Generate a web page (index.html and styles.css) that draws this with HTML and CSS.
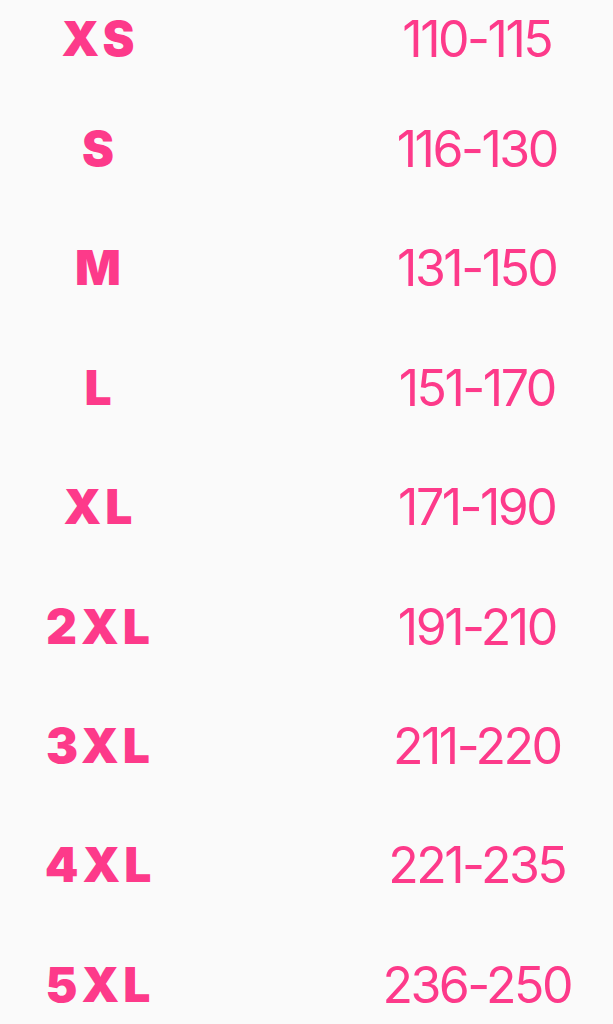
FILE: index.html
```html
<!DOCTYPE html>
<html lang="en">
<head>
<meta charset="utf-8">
<title>Size chart</title>
<link rel="stylesheet" href="styles.css">
</head>
<body>
<main class="chart">
  <div class="row first"><span class="size">XS</span><span class="range">110-115</span></div>
  <div class="row"><span class="size">S</span><span class="range">116-130</span></div>
  <div class="row"><span class="size">M</span><span class="range">131-150</span></div>
  <div class="row"><span class="size">L</span><span class="range">151-170</span></div>
  <div class="row"><span class="size">XL</span><span class="range">171-190</span></div>
  <div class="row"><span class="size">2XL</span><span class="range">191-210</span></div>
  <div class="row"><span class="size">3XL</span><span class="range">211-220</span></div>
  <div class="row"><span class="size">4XL</span><span class="range">221-235</span></div>
  <div class="row"><span class="size">5XL</span><span class="range">236-250</span></div>
</main>
</body>
</html>
```
FILE: styles.css
```css
html, body {
  margin: 0;
  padding: 0;
  background: #fafafa;
}
body {
  width: 613px;
  height: 1024px;
  overflow: hidden;
  font-family: Inter, "Noto Sans", sans-serif;
  color: #fd3a8a;
}
.chart {
  display: flex;
  flex-direction: column;
}
.row {
  display: flex;
  align-items: center;
  height: 119.4px;
}
.row.first {
  height: 89.3px;
  padding-bottom: 11px;
  box-sizing: border-box;
}
.size {
  width: 196px;
  text-align: center;
  font-weight: 900;
  font-size: 48px;
  line-height: 1;
  letter-spacing: 4px;
  text-indent: 4px;
}
.range {
  width: 270px;
  margin-left: auto;
  text-align: center;
  font-weight: 400;
  font-size: 50px;
  line-height: 1;
  letter-spacing: -2.5px;
  text-indent: -2.5px;
}
```
